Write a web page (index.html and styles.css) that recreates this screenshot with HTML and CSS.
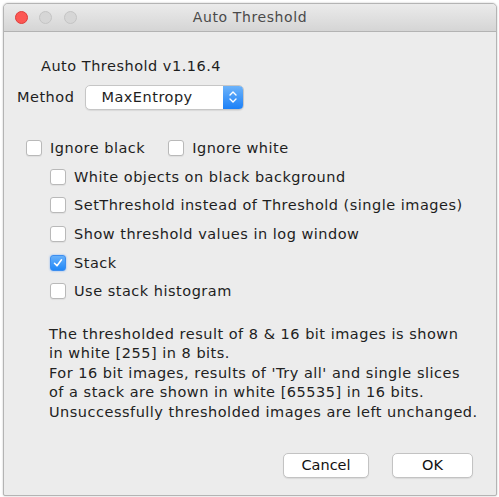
FILE: index.html
```html
<!DOCTYPE html>
<html>
<head>
<meta charset="utf-8">
<link rel="stylesheet" href="styles.css">
</head>
<body>
<div class="window">
  <div class="titlebar">
    <div class="lights">
      <span class="light red"></span>
      <span class="light gray"></span>
      <span class="light gray"></span>
    </div>
    <div class="title">Auto Threshold</div>
  </div>
  <div class="content">
    <div class="heading">Auto Threshold v1.16.4</div>
    <div class="method-row">
      <span class="method-label">Method</span>
      <div class="select">
        <span class="select-text">MaxEntropy</span>
        <span class="stepper">
          <svg width="10" height="16" viewBox="0 0 10 16"><path d="M2 6 L5 3 L8 6 M2 10 L5 13 L8 10" fill="none" stroke="#fff" stroke-width="1.4" stroke-linecap="round" stroke-linejoin="round"/></svg>
        </span>
      </div>
    </div>
    <div class="checks">
      <div class="row first">
        <label class="check"><span class="box"></span><span>Ignore black</span></label>
        <label class="check second"><span class="box"></span><span>Ignore white</span></label>
      </div>
      <div class="row indent"><label class="check"><span class="box"></span><span>White objects on black background</span></label></div>
      <div class="row indent"><label class="check"><span class="box"></span><span>SetThreshold instead of Threshold (single images)</span></label></div>
      <div class="row indent"><label class="check"><span class="box"></span><span>Show threshold values in log window</span></label></div>
      <div class="row indent"><label class="check"><span class="box checked"><svg width="12" height="12" viewBox="0 0 12 12"><path d="M2.5 6.3 L5 8.8 L9.5 2.8" fill="none" stroke="#fff" stroke-width="1.6" stroke-linecap="round" stroke-linejoin="round"/></svg></span><span>Stack</span></label></div>
      <div class="row indent"><label class="check"><span class="box"></span><span>Use stack histogram</span></label></div>
    </div>
    <p class="note">The thresholded result of 8 &amp; 16 bit images is shown<br>in white [255] in 8 bits.<br>For 16 bit images, results of 'Try all' and single slices<br>of a stack are shown in white [65535] in 16 bits.<br>Unsuccessfully thresholded images are left unchanged.</p>
    <div class="buttons">
      <button class="btn cancel">Cancel</button>
      <button class="btn ok">OK</button>
    </div>
  </div>
</div>
</body>
</html>
```

FILE: styles.css
```css
html, body {
  margin: 0;
  padding: 0;
  background: #ffffff;
}
body {
  font-family: "DejaVu Sans", "Liberation Sans", sans-serif;
  color: #1e1e1e;
  width: 499px;
  height: 497px;
  overflow: hidden;
}
.window {
  margin: 3px 0 0 3px;
  width: 492px;
  height: 491px;
  border: 1px solid #b4b4b4;
  border-radius: 5px 5px 2px 2px;
  background: #ececec;
  box-shadow: 0 0 2px rgba(0,0,0,0.25);
  display: flex;
  flex-direction: column;
  overflow: hidden;
}
.titlebar {
  height: 27px;
  flex: none;
  background: linear-gradient(#ebebeb, #d5d5d5);
  border-bottom: 1px solid #b3b3b3;
  display: flex;
  align-items: center;
  position: relative;
}
.lights {
  display: flex;
  gap: 11.5px;
  padding-left: 10.5px;
}
.light {
  width: 13px;
  height: 13px;
  border-radius: 50%;
  box-sizing: border-box;
}
.light.red {
  background: #fc5753;
  border: 1px solid #df3d3a;
}
.light.gray {
  background: #d6d6d6;
  border: 1px solid #c4c4c4;
}
.title {
  position: absolute;
  left: 0;
  right: 0;
  text-align: center;
  font-size: 14px;
  letter-spacing: 0.6px;
  color: #4a4a4a;
  top: 5px;
}
.content {
  flex: 1;
  display: flex;
  flex-direction: column;
  font-size: 14.5px;
  letter-spacing: 0.5px;
}
.heading {
  margin: 24px 0 0 37px;
  line-height: 20px;
}
.method-row {
  display: flex;
  align-items: center;
  margin: 8px 0 0 13px;
  gap: 11px;
  height: 26px;
}
.select {
  width: 159px;
  height: 25px;
  box-sizing: border-box;
  background: #fff;
  border: 1px solid #c6c6c6;
  border-radius: 5px;
  box-shadow: 0 1px 1px rgba(0,0,0,0.08);
  display: flex;
  align-items: center;
  overflow: hidden;
}
.select-text {
  flex: 1;
  padding-left: 15px;
}
.stepper {
  width: 20px;
  height: 100%;
  background: linear-gradient(#6cb3fa, #1c80f7);
  display: flex;
  align-items: center;
  justify-content: center;
}
.checks {
  margin-top: 24px;
  display: flex;
  flex-direction: column;
}
.row {
  height: 28.6px;
  display: flex;
  align-items: center;
}
.row.first {
  padding-left: 22px;
  gap: 23px;
}
.row.indent {
  padding-left: 46px;
}
.check {
  display: flex;
  align-items: center;
  gap: 8px;
}
.box {
  width: 16px;
  height: 16px;
  box-sizing: border-box;
  background: #fff;
  border: 1px solid #b9b9b9;
  border-radius: 3px;
  box-shadow: 0 1px 1px rgba(0,0,0,0.06);
  display: flex;
  align-items: center;
  justify-content: center;
}
.box.checked {
  background: linear-gradient(#68b1fa, #2088f8);
  border-color: #3c8ef0;
  box-shadow: 0 0 2px rgba(40,130,250,0.6);
}
.note {
  margin: 19px 0 0 45px;
  line-height: 19.6px;
  color: #222;
}
.buttons {
  margin: 30px 0 0 279px;
  display: flex;
  gap: 23px;
}
.btn {
  height: 25px;
  box-sizing: border-box;
  background: #fff;
  border: 1px solid #c3c3c3;
  border-radius: 5px;
  box-shadow: 0 1px 1px rgba(0,0,0,0.08);
  font-family: "DejaVu Sans", "Liberation Sans", sans-serif;
  font-size: 14.5px;
  color: #111;
  padding: 0;
}
.btn.cancel { width: 86px; }
.btn.ok { width: 81px; }
```
